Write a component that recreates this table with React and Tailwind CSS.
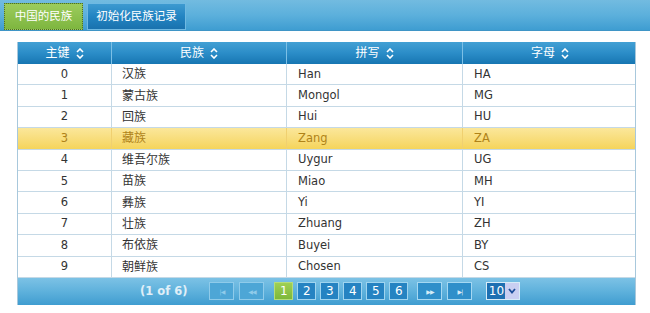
import React from "react";

const rows = [
  ["0", "汉族", "Han", "HA"],
  ["1", "蒙古族", "Mongol", "MG"],
  ["2", "回族", "Hui", "HU"],
  ["3", "藏族", "Zang", "ZA"],
  ["4", "维吾尔族", "Uygur", "UG"],
  ["5", "苗族", "Miao", "MH"],
  ["6", "彝族", "Yi", "YI"],
  ["7", "壮族", "Zhuang", "ZH"],
  ["8", "布依族", "Buyei", "BY"],
  ["9", "朝鲜族", "Chosen", "CS"],
];

const SortIcon = () => (
  <svg width="8" height="11" viewBox="0 0 8 11" className="ml-[6px]">
    <path d="M1 4 L4 1 L7 4" fill="none" stroke="#fff" strokeWidth="1.6" />
    <path d="M1 7 L4 10 L7 7" fill="none" stroke="#fff" strokeWidth="1.6" />
  </svg>
);

const PageNavBtn = ({ children, faded }) => (
  <div
    className={`w-[25px] h-[18px] flex items-center justify-center border text-[6px] tracking-[-1px] ${
      faded
        ? "border-[#8fcbea] bg-[#4da6d6] text-[#8fcbea]"
        : "border-[#a5d8f2] bg-[#2f8fca] text-[#d6ecf8]"
    }`}
  >
    {children}
  </div>
);

const PageNum = ({ n, active }) => (
  <div
    className={`w-[19px] h-[18px] flex items-center justify-center border text-[12px] text-white ${
      active
        ? "border-[#b5dd7a] bg-gradient-to-b from-[#9fd055] to-[#7db83a]"
        : "border-[#9fd4ef] bg-[#2583c2]"
    }`}
  >
    {n}
  </div>
);

export default function App() {
  const cols = "grid grid-cols-[93px_175px_176px_175px]";

  return (
    <div className="w-[650px] h-[313px] bg-white font-['DejaVu_Sans','Noto_Sans_CJK_SC',sans-serif] overflow-hidden">
      {/* TABS */}
      <div className="h-[31px] flex items-start pt-[3px] pl-[4px] gap-[4px] border-b border-[#3f95c6] bg-gradient-to-b from-[#72bbe0] via-[#5cb0dc] to-[#3e9dd1]">
        <div className="h-[27px] w-[79px] flex items-center justify-center border border-dotted border-[#506b2a] bg-gradient-to-b from-[#9ccc5c] to-[#7eb63f] text-white text-[11.5px]">
          中国的民族
        </div>
        <div className="h-[27px] w-[99px] flex items-center justify-center border border-[#6fb9e2] bg-gradient-to-b from-[#3d9ad0] via-[#2284c2] to-[#1a72ae] text-white text-[11.5px]">
          初始化民族记录
        </div>
      </div>

      {/* TABLE */}
      <div className="mt-[11px] ml-[17px] w-[619px] border-x border-[#a8c8dc]">
        <div className={`${cols} h-[22px] bg-gradient-to-b from-[#43a0d4] via-[#2b8dc8] to-[#1676b2] text-white text-[12px]`}>
          {["主键", "民族", "拼写", "字母"].map((h, i) => (
            <div
              key={h}
              className={`flex items-center justify-center ${i > 0 ? "border-l border-[#7cc0e6]" : ""}`}
            >
              {h}
              <SortIcon />
            </div>
          ))}
        </div>

        {rows.map((r) => {
          const hl = r[0] === "3";
          return (
            <div
              key={r[0]}
              className={`${cols} h-[21.4px] border-b border-[#c5d9e6] text-[11.5px] ${
                hl
                  ? "bg-gradient-to-b from-[#fbe79a] to-[#f5d45a] text-[#b08318]"
                  : "bg-white text-[#333]"
              }`}
            >
              <div className="flex items-center justify-center">{r[0]}</div>
              <div className={`flex items-center pl-[10px] text-[12px] border-l ${hl ? "border-[#f0d070]" : "border-[#c5d9e6]"}`}>
                {r[1]}
              </div>
              <div className={`flex items-center pl-[11px] border-l ${hl ? "border-[#f0d070]" : "border-[#c5d9e6]"}`}>
                {r[2]}
              </div>
              <div className={`flex items-center pl-[11px] border-l ${hl ? "border-[#f0d070]" : "border-[#c5d9e6]"}`}>
                {r[3]}
              </div>
            </div>
          );
        })}

        {/* PAGINATOR */}
        <div className="h-[27px] flex items-center pl-[122px] bg-gradient-to-b from-[#7cc2e5] via-[#5eb1dc] to-[#3f9dd0]">
          <span className="text-[11.5px] font-bold text-[#e0eff8] whitespace-nowrap">(1 of 6)</span>
          <div className="ml-[22px] flex gap-[5px]">
            <PageNavBtn faded>|◀</PageNavBtn>
            <PageNavBtn faded>◀◀</PageNavBtn>
          </div>
          <div className="ml-[10px] flex gap-[4px]">
            <PageNum n="1" active />
            {[2, 3, 4, 5, 6].map((n) => (
              <PageNum key={n} n={n} />
            ))}
          </div>
          <div className="ml-[9px] flex gap-[5px]">
            <PageNavBtn>▶▶</PageNavBtn>
            <PageNavBtn>▶|</PageNavBtn>
          </div>
          <div className="ml-[14px] flex h-[18px] border border-[#d8ecf8]">
            <div className="w-[18px] flex items-center justify-center bg-[#1d70b2] text-white text-[12px]">
              10
            </div>
            <div className="w-[14px] flex items-center justify-center bg-[#c9cff2]">
              <svg width="8" height="6" viewBox="0 0 8 6">
                <path d="M1 1 L4 4.5 L7 1" fill="none" stroke="#1d4f9a" strokeWidth="1.8" />
              </svg>
            </div>
          </div>
        </div>
      </div>
    </div>
  );
}
